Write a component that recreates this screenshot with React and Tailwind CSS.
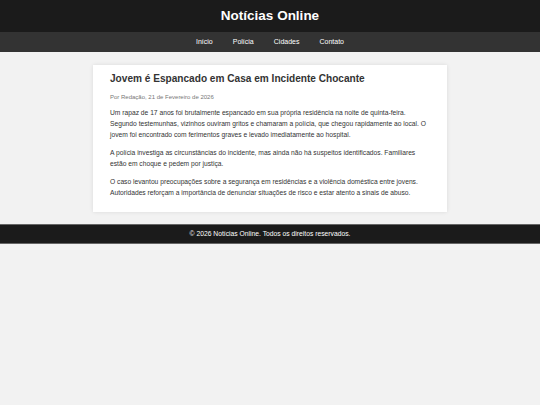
import React from 'react';

const links = ['Início', 'Polícia', 'Cidades', 'Contato'];

export default function App() {
  return (
    <div className="min-h-[405px] bg-[#f2f2f2] font-['Liberation_Sans',Arial,sans-serif]">
      <header className="h-[32px] bg-[#1b1b1b] flex items-center justify-center">
        <h1 className="text-white text-[13.5px] font-bold">Notícias Online</h1>
      </header>
      <nav className="h-[20px] bg-[#333333] flex items-center justify-center">
        {links.map((l) => (
          <a key={l} className="text-white text-[7px] mx-[10px]">{l}</a>
        ))}
      </nav>
      <main className="pt-[13px] pb-[12px] flex justify-center">
        <article className="w-[354px] bg-white px-[17px] pt-[7px] pb-[14px] shadow-[0_0_4px_rgba(0,0,0,0.1)]">
          <h2 className="text-[10.1px] font-bold text-[#333] leading-[14px]">Jovem é Espancado em Casa em Incidente Chocante</h2>
          <p className="text-[6px] text-[#777] mt-[6px] leading-[10px]">Por Redação, 21 de Fevereiro de 2026</p>
          <div className="text-[6.7px] text-[#333] leading-[11px] mt-[5px] space-y-[7px]">
            <p>Um rapaz de 17 anos foi brutalmente espancado em sua própria residência na noite de quinta-feira. Segundo testemunhas, vizinhos ouviram gritos e chamaram a polícia, que chegou rapidamente ao local. O jovem foi encontrado com ferimentos graves e levado imediatamente ao hospital.</p>
            <p>A polícia investiga as circunstâncias do incidente, mas ainda não há suspeitos identificados. Familiares estão em choque e pedem por justiça.</p>
            <p>O caso levantou preocupações sobre a segurança em residências e a violência doméstica entre jovens. Autoridades reforçam a importância de denunciar situações de risco e estar atento a sinais de abuso.</p>
          </div>
        </article>
      </main>
      <footer className="h-[20px] bg-[#1b1b1b] border-y border-[#666] flex items-center justify-center">
        <p className="text-white text-[6.75px]">© 2026 Notícias Online. Todos os direitos reservados.</p>
      </footer>
    </div>
  );
}
